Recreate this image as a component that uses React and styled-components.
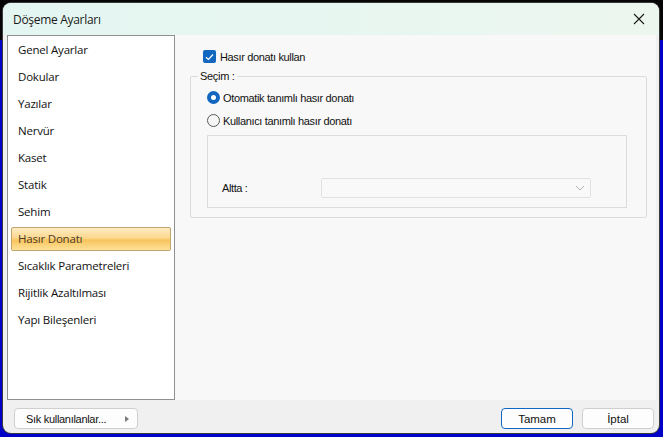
import styled, { createGlobalStyle } from "styled-components";

const GlobalStyles = createGlobalStyle`
  html, body {
    margin: 0;
    height: 100%;
  }
  body {
    background: linear-gradient(to bottom, #050505 0 40px, #0000c8 40px);
    font-family: "Liberation Sans", Arial, sans-serif;
    overflow: hidden;
  }
`;

const menuItems = [
  "Genel Ayarlar",
  "Dokular",
  "Yazılar",
  "Nervür",
  "Kaset",
  "Statik",
  "Sehim",
  "Hasır Donatı",
  "Sıcaklık Parametreleri",
  "Rijitlik Azaltılması",
  "Yapı Bileşenleri",
];

export default function App() {
  return (
    <>
      <GlobalStyles />
      <Screen>
        <Window>
          <TitleBar>
            <Title>Döşeme Ayarları</Title>
            <CloseButton>
              <svg width="12" height="12" viewBox="0 0 12 12">
                <path d="M1 1 L11 11 M11 1 L1 11" stroke="#1a1a1a" strokeWidth="1.1" />
              </svg>
            </CloseButton>
          </TitleBar>
          <Body>
            <NavList>
              {menuItems.map((item) => (
                <NavItem key={item} $active={item === "Hasır Donatı"}>
                  {item}
                </NavItem>
              ))}
            </NavList>
            <Content>
              <CheckRow>
                <CheckBox>
                  <svg width="9" height="8" viewBox="0 0 9 8">
                    <path d="M1 4.2 L3.4 6.5 L8 1.5" fill="none" stroke="#fff" strokeWidth="1.2" />
                  </svg>
                </CheckBox>
                <Label>Hasır donatı kullan</Label>
              </CheckRow>
              <GroupBox>
                <Legend>Seçim :</Legend>
                <RadioRow>
                  <Radio $checked />
                  <Label>Otomatik tanımlı hasır donatı</Label>
                </RadioRow>
                <RadioRow>
                  <Radio />
                  <Label>Kullanıcı tanımlı hasır donatı</Label>
                </RadioRow>
                <InnerBox>
                  <FieldRow>
                    <FieldLabel>Altta :</FieldLabel>
                    <Combo>
                      <svg width="10" height="6" viewBox="0 0 10 6">
                        <path d="M1 1 L5 5 L9 1" fill="none" stroke="#b4b4b4" strokeWidth="1" />
                      </svg>
                    </Combo>
                  </FieldRow>
                </InnerBox>
              </GroupBox>
            </Content>
          </Body>
          <Footer>
            <MenuButton>
              Sık kullanılanlar...
              <Arrow />
            </MenuButton>
            <Spacer />
            <DialogButton $primary>Tamam</DialogButton>
            <DialogButton>İptal</DialogButton>
          </Footer>
        </Window>
      </Screen>
    </>
  );
}

const Screen = styled.div`
  padding: 3px 4px 4px 3px;
  height: 437px;
  box-sizing: border-box;
`;

const Window = styled.div`
  display: flex;
  flex-direction: column;
  height: 430px;
  background: #f0f0f0;
  border-radius: 8px;
  overflow: hidden;
  box-shadow: 0 0 0 1px #3a3a3a;
`;

const TitleBar = styled.div`
  display: flex;
  align-items: center;
  justify-content: space-between;
  height: 32px;
  flex-shrink: 0;
  padding: 0 14px 0 10px;
  background: linear-gradient(to right, #e4f6f2, #ecf6ef);
`;

const Title = styled.div`
  font-family: "Open Sans", "Liberation Sans", sans-serif;
  font-size: 12px;
  letter-spacing: -0.3px;
  color: #1a1a1a;
`;

const CloseButton = styled.div`
  display: flex;
  align-items: center;
`;

const Body = styled.div`
  display: flex;
  flex: 1;
  padding: 0 3px 0 4px;
  min-height: 0;
`;

const NavList = styled.div`
  display: flex;
  flex-direction: column;
  gap: 3px;
  width: 168px;
  flex-shrink: 0;
  padding: 2px 3px;
  box-sizing: border-box;
  background: #fff;
  border: 1px solid #8f9091;
`;

const NavItem = styled.div`
  height: 24px;
  box-sizing: border-box;
  line-height: 22px;
  padding-left: 6px;
  font-family: "Open Sans", "Liberation Sans", sans-serif;
  font-size: 11.5px;
  font-weight: 500;
  letter-spacing: -0.2px;
  color: ${(p) => (p.$active ? "#4a3a26" : "#111")};
  border: 1px solid ${(p) => (p.$active ? "#c5a46b" : "transparent")};
  border-radius: 2px;
  background: ${(p) =>
    p.$active
      ? "linear-gradient(to bottom, #fdebc4 0%, #fbd88e 45%, #f8c35c 55%, #fde29a 100%)"
      : "transparent"};
`;

const Content = styled.div`
  flex: 1;
  background: #f8f8f8;
  padding: 15px 9px 0 15px;
`;

const CheckRow = styled.div`
  display: flex;
  align-items: center;
  gap: 4px;
  padding-left: 13px;
  height: 13px;
`;

const CheckBox = styled.div`
  display: flex;
  align-items: center;
  justify-content: center;
  width: 13px;
  height: 13px;
  border-radius: 2px;
  background: #1167c0;
`;

const Label = styled.span`
  font-family: "Liberation Sans", Arial, sans-serif;
  font-size: 11px;
  letter-spacing: -0.35px;
  color: #111;
`;

const GroupBox = styled.fieldset`
  margin: 7px 0 0;
  padding: 4px 19px 9px 16px;
  border: 1px solid #dcdcdc;
  border-radius: 2px;
`;

const Legend = styled.legend`
  margin-left: -9px;
  padding: 0 2px;
  font-family: "Liberation Sans", Arial, sans-serif;
  font-size: 11px;
  letter-spacing: -0.3px;
  color: #111;
`;

const RadioRow = styled.div`
  display: flex;
  align-items: center;
  gap: 3px;
  height: 23px;
`;

const Radio = styled.span`
  width: 13px;
  height: 13px;
  border-radius: 50%;
  box-sizing: border-box;
  background: ${(p) => (p.$checked ? "#fff" : "#f6f6f6")};
  border: ${(p) => (p.$checked ? "4px solid #1167c0" : "1px solid #5a5a5a")};
`;

const InnerBox = styled.div`
  margin-top: 3px;
  height: 73px;
  border: 1px solid #dcdcdc;
  display: flex;
  align-items: flex-end;
  padding-bottom: 9px;
  box-sizing: border-box;
`;

const FieldRow = styled.div`
  display: flex;
  align-items: center;
`;

const FieldLabel = styled.span`
  width: 99px;
  padding-left: 14px;
  font-family: "Liberation Sans", Arial, sans-serif;
  font-size: 11px;
  letter-spacing: -0.4px;
  color: #111;
`;

const Combo = styled.div`
  display: flex;
  align-items: center;
  justify-content: flex-end;
  width: 270px;
  height: 20px;
  box-sizing: border-box;
  padding-right: 5px;
  background: #f9f9f9;
  border: 1px solid #e2e2e2;
  border-radius: 2px;
`;

const Footer = styled.div`
  display: flex;
  align-items: flex-start;
  gap: 9px;
  height: 33px;
  box-sizing: border-box;
  flex-shrink: 0;
  padding: 8px 5px 0 11px;
`;

const Spacer = styled.div`
  flex: 1;
`;

const MenuButton = styled.div`
  display: flex;
  align-items: center;
  justify-content: space-between;
  width: 124px;
  height: 21px;
  box-sizing: border-box;
  padding: 0 8px 0 11px;
  background: #fdfdfd;
  border: 1px solid #cfcfcf;
  border-radius: 4px;
  font-family: "Liberation Sans", Arial, sans-serif;
  font-size: 11px;
  letter-spacing: -0.3px;
  color: #111;
`;

const Arrow = styled.span`
  width: 0;
  height: 0;
  border-top: 3.5px solid transparent;
  border-bottom: 3.5px solid transparent;
  border-left: 4px solid #7a7a7a;
`;

const DialogButton = styled.div`
  display: flex;
  align-items: center;
  justify-content: center;
  width: 72px;
  height: 21px;
  box-sizing: border-box;
  background: #fdfdfd;
  border: ${(p) => (p.$primary ? "1.5px solid #0f68c4" : "1px solid #cfcfcf")};
  border-radius: 4px;
  font-family: "Liberation Sans", Arial, sans-serif;
  font-size: 11.5px;
  color: #111;
`;
